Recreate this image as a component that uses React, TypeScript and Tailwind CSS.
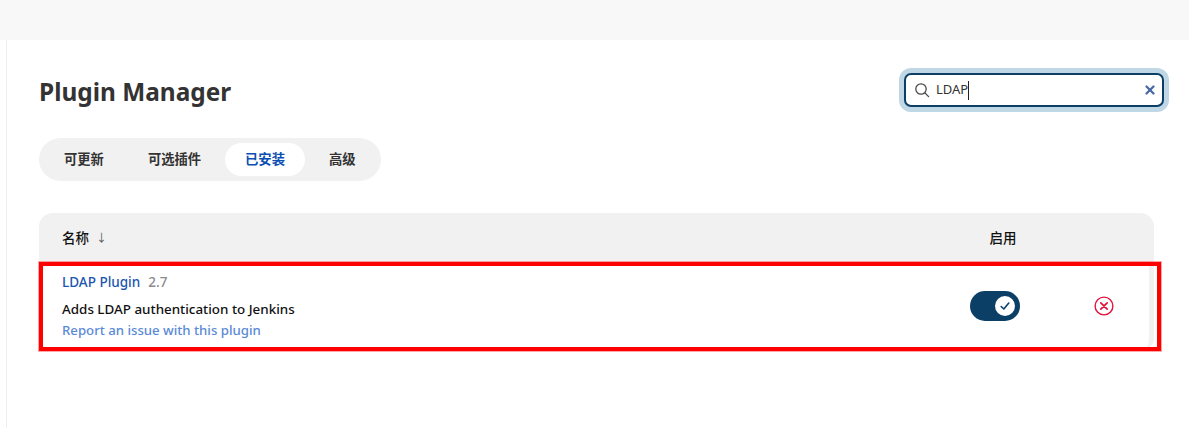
import { X } from 'lucide-react';

const font = "font-['Noto_Sans','Noto_Sans_CJK_SC',sans-serif]";

function SearchIcon() {
  return (
    <svg width="16" height="16" viewBox="0 0 16 16" fill="none" stroke="#4a4a4a" strokeWidth="1.3" className="shrink-0">
      <circle cx="7" cy="7" r="5.2" />
      <path d="M10.8 10.8 14.6 14.6" strokeLinecap="round" />
    </svg>
  );
}

function Tabs() {
  const tabs = ['可更新', '可选插件', '已安装', '高级'];
  return (
    <div className="flex w-[342px] h-[43px] gap-1 p-[5px] rounded-[22px] bg-[#f1f1f1]">
      {tabs.map((tab) => (
        <div
          key={tab}
          className={
            tab === '已安装'
              ? 'flex items-center px-5 whitespace-nowrap rounded-[17px] bg-white text-[13.3px] font-semibold text-[#0b4fb3]'
              : 'flex items-center px-5 whitespace-nowrap text-[13.3px] font-semibold text-[#333333]'
          }
        >
          {tab}
        </div>
      ))}
    </div>
  );
}

function Row() {
  return (
    <div className="flex h-[86px] bg-white border-r-[5px] border-[#f1f1f1] rounded-b-[10px]">
      <div className="flex-1 pl-[23px] pt-[9px]">
        <div className="flex items-center gap-2 h-[20px] text-[13.5px] font-medium">
          <span className="text-[#1a56b0]">LDAP Plugin</span>
          <span className="text-[#8a8a8f]">2.7</span>
        </div>
        <div className="mt-[7px] h-[20px] leading-[20px] text-[13.4px] font-medium text-[#111111]">
          Adds LDAP authentication to Jenkins
        </div>
        <div className="mt-[1px] h-[20px] leading-[20px] text-[13.2px] font-medium text-[#5a8ad6]">
          Report an issue with this plugin
        </div>
      </div>
      <div className="flex items-center justify-center w-[100px]">
        <div className="flex items-center justify-end w-[50px] h-[30px] pr-[5px] rounded-[15px] bg-[#0b3f66]">
          <div className="flex items-center justify-center w-[20px] h-[20px] rounded-full bg-white">
            <svg width="12" height="12" viewBox="0 0 12 12" fill="none" stroke="#0b3f66" strokeWidth="1.6" strokeLinecap="round" strokeLinejoin="round">
              <path d="M2.2 6.5 4.8 9 9.8 3" />
            </svg>
          </div>
        </div>
      </div>
      <div className="flex items-center justify-center w-[104px] pl-[14px]">
        <svg width="20" height="20" viewBox="0 0 20 20" fill="none" stroke="#e0123a" strokeWidth="1.4" strokeLinecap="round">
          <circle cx="10" cy="10" r="8.9" />
          <path d="M6.8 6.8 13.2 13.2M13.2 6.8 6.8 13.2" strokeWidth="1.7" />
        </svg>
      </div>
    </div>
  );
}

export default function App() {
  return (
    <div className={`relative w-[1189px] h-[428px] overflow-hidden bg-white ${font}`}>
      <div className="h-10 bg-[#f8f8f8]" />
      <div className="flex h-[388px]">
        <div className="w-[7px] shrink-0 border-r border-[#efefef]" />
        <div className="flex-1 pl-8 pr-[35px]">
          <div className="flex items-center justify-between h-[44px] mt-7">
            <h1 className="h-[44px] text-[24.4px] leading-[48px] font-bold text-[#333333]">Plugin Manager</h1>
            <div className="flex items-center gap-[5px] w-[260px] h-[34px] mr-[-10px] pl-2 pr-[5px] rounded-[7px] border-2 border-[#0b3f66] bg-white ring-[5px] ring-[#c0d7e6]">
              <SearchIcon />
              <span className="flex-1 flex items-center text-[13px] text-[#333333] ml-[1px]">
                LDAP
                <span className="w-px h-[19px] bg-[#222222]" />
              </span>
              <X size={14} strokeWidth={4} className="text-[#4a6aa5]" />
            </div>
          </div>
          <div className="mt-[26px]">
            <Tabs />
          </div>
          <div className="mt-8">
            <div className="flex items-center h-[50px] rounded-t-[14px] bg-[#f1f1f1] text-[13.5px] font-medium text-[#111111]">
              <div className="flex flex-1 items-center gap-[7px] pl-[23px]">
                <span>名称</span>
                <span className="text-[11px] text-[#555555] font-normal">↓</span>
              </div>
              <div className="w-[100px] text-center">启用</div>
              <div className="w-[101px]" />
            </div>
            <Row />
          </div>
        </div>
      </div>
      <div className="absolute left-[39px] top-[262px] w-[1122px] h-[89px] border-[4px] border-[#ff0000] shadow-[0_0_0_1px_rgba(255,0,0,0.35)]" />
    </div>
  );
}
